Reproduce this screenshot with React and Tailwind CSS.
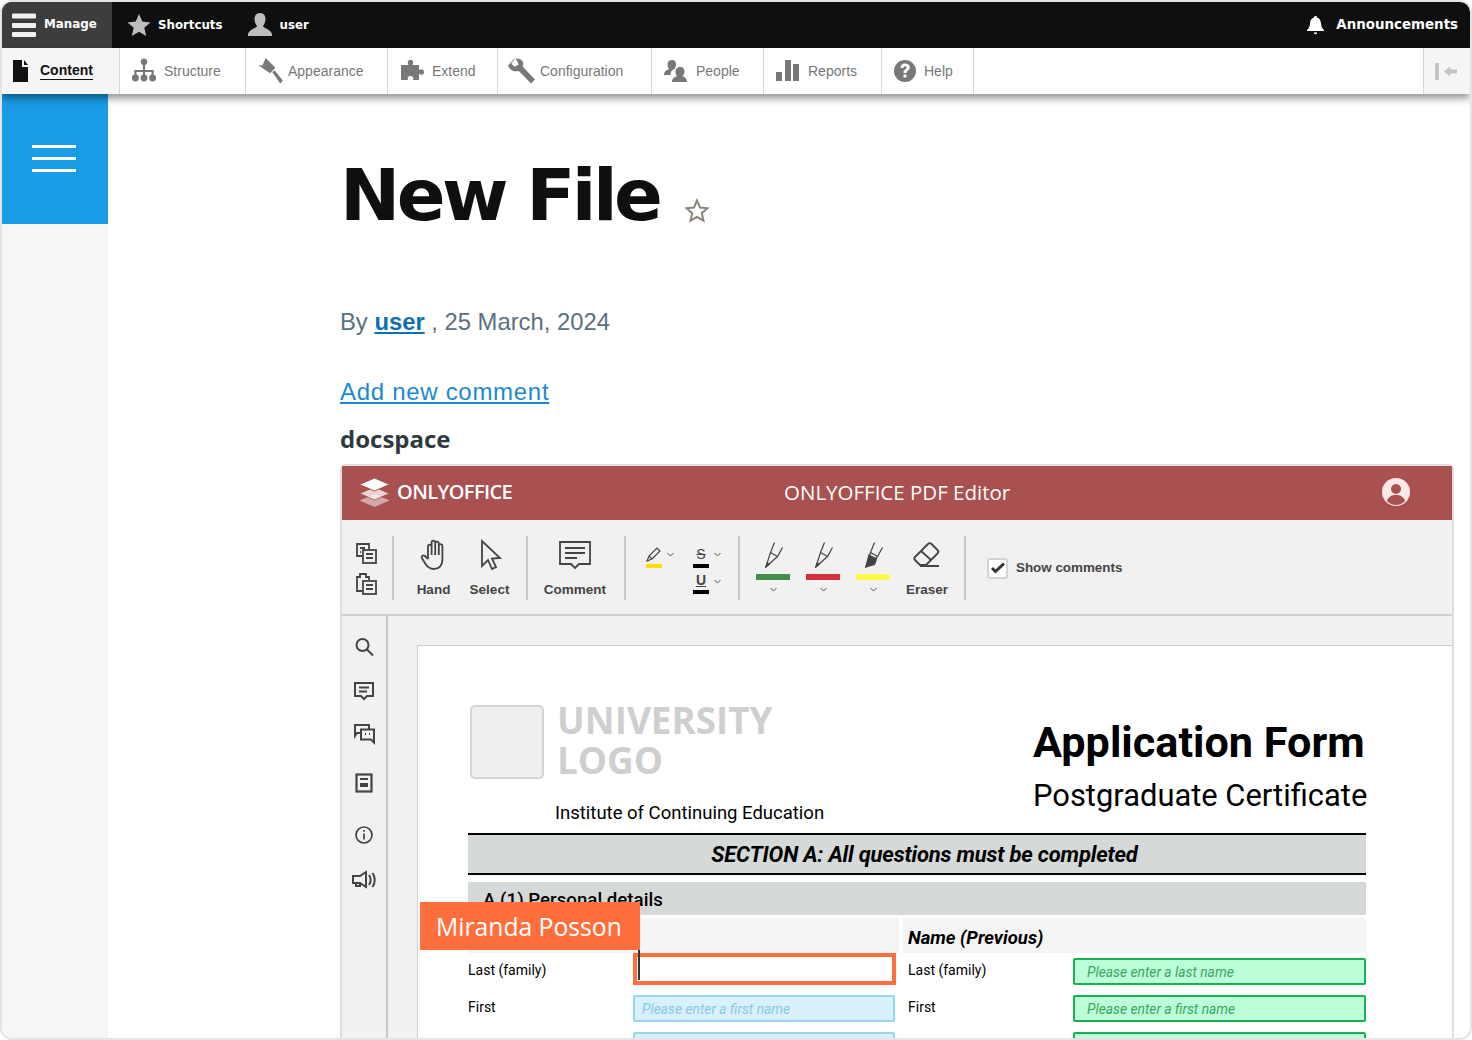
const arial = "font-['Liberation_Sans',Arial,sans-serif]";
const roboto = "font-['Roboto',sans-serif]";
const open = "font-['Open_Sans',sans-serif]";
const deja = "font-['DejaVu_Sans',sans-serif]";

const Gray = ({ children, size = 26, box = '0 0 26 26', fill = '#787878' }) => (
  <svg width={size} height={size} viewBox={box} fill={fill}>{children}</svg>
);

const adminItems = [
  {
    label: 'Structure', width: 'w-[126px] pl-[10px]', gap: 'gap-[6px]', icon: (
      <Gray size={28}><circle cx="13" cy="4.500" r="3" /><path d="M12 6h2v6h8v5h-2v-3h-6v3h-2v-3H6v3H4v-5h8z" /><circle cx="5" cy="19.500" r="3.200" /><circle cx="13" cy="19.500" r="3.200" /><circle cx="21" cy="19.500" r="3.200" /></Gray>
    ),
  },
  {
    label: 'Appearance', width: 'w-[142px] pl-[10px]', gap: 'gap-[4px]', icon: (
      <Gray size={28}><path d="M9 1l9 9-5 5-11-7.500L6 8z" /><path d="M15 14l2.500-1.500 7.500 9.500-2.500 2.500z" /></Gray>
    ),
  },
  {
    label: 'Extend', width: 'w-[110px] pl-[11px]', gap: 'gap-[7px]', icon: (
      <Gray><path d="M2 7h7.500C8 4 9 2 11.500 2S15 4 13.500 7H20v5c3-1.500 5-.5 5 2s-2 3.500-5 2v6h-6c1-3-.5-4-2.500-4S8 19 9 22H2z" /></Gray>
    ),
  },
  {
    label: 'Configuration', width: 'w-[154px] pl-[10px]', gap: 'gap-[4px]', icon: (
      <Gray size={28}><path d="M0 8l6-6.500c3-.5 6 0 7.500 2.500.8 1.500.8 3.500.3 5L25 21l-3.500 3.500L10 13c-2 .5-4.500.5-6-.5-2-1-3.500-2.500-4-4.500z" /><path d="M7 1L3 6l3 3 4-2z" fill="#fff" /></Gray>
    ),
  },
  {
    label: 'People', width: 'w-[112px] pl-[11px]', gap: 'gap-[7px]', icon: (
      <Gray><path d="M9 2c3 0 4 2 4 4.500 0 2-1 3.500-1.500 4.500-3 1-4 3-4 6H1c0-4 3-5 5-6-1-1-1.500-3-1.500-4.500C4.500 4 6 2 9 2z" /><path d="M17 9c3 0 4.500 2 4.500 4.500 0 2-1 3.500-2 4.500 2 1 4.500 2 4.500 6H9c0-4 3-5 5-6-1-1-1.500-2.500-1.500-4.500C12.500 11 14 9 17 9z" /></Gray>
    ),
  },
  {
    label: 'Reports', width: 'w-[118px] pl-[11px]', gap: 'gap-[7px]', icon: (
      <Gray><rect x="1" y="14" width="6" height="9" /><rect x="10" y="2" width="6" height="21" /><rect x="18" y="6" width="6" height="17" /></Gray>
    ),
  },
  {
    label: 'Help', width: 'w-[92px] pl-[10px]', gap: 'gap-[6px]', icon: (
      <Gray><path fillRule="evenodd" d="M13 2a11 11 0 1 1 0 22 11 11 0 0 1 0-22zM8.500 10h3c0-1 .5-1.800 1.500-1.800s1.600.6 1.600 1.400c0 1.700-3.100 2-3.100 5.400h3c0-2.400 3.300-2.700 3.300-5.600C17.800 7 15.800 5.500 13 5.500c-2.900 0-4.500 1.900-4.500 4.500zM11.500 16.500v3h3v-3z" /></Gray>
    ),
  },
];

const Ic = ({ w = 30, h = 30, box = '0 0 30 30', sw = 2, children }) => (
  <svg width={w} height={h} viewBox={box} fill="none" stroke="#444" strokeWidth={sw}>{children}</svg>
);

const Chevron = () => (
  <svg width="7" height="5" viewBox="0 0 7 5" fill="none" stroke="#555" strokeWidth="1"><path d="M.5 1L3.500 4 6.500 1" /></svg>
);

const Divider = () => <div className="w-[2px] h-[64px] bg-[#c8c8c8]" />;

const Marker = ({ color, fat }) => (
  <div className="flex flex-col items-center w-[34px]">
    <svg className="translate-x-[2px]" width="20" height="26" viewBox="0 0 20 26" fill="none" stroke="#444" strokeWidth="1.200">
      <path d="M9.500.5L5.500 10.500.8 25 12.500 14.500 17.500 5.500" />
      <path d="M5.500 10.500l7 4" />
      {fat ? <path d="M4 13l7.500 4-2 5.500-8.500 2.500z" fill="#444" /> : <path d="M.8 25l3.400-2.800-2-1z" fill="#444" />}
    </svg>
    <div className="w-[34px] h-[6px] mt-[6px]" style={{ backgroundColor: color }} />
    <div className="mt-[7px] h-[5px] flex"><Chevron /></div>
  </div>
);

const Field = ({ text, tone, className = '' }) => (
  <div className={`${tone === 'green' ? 'bg-[#bdffd8] border-[#16b150] text-[#35a85f] w-[293px] pl-[12px]' : 'bg-[#d8f1fd] border-[#9bd6ef] text-[#89c8e4] w-[262px] pl-[7px]'} h-[27px] border-2 rounded-[2px] italic text-[13.800px] leading-[24px] ${className}`}>
    {text}
  </div>
);

export default function App() {
  return (
    <div className="w-[1472px] h-[1040px] overflow-hidden bg-white border-2 border-[#e4e4e4] rounded-[12px] flex flex-col relative">
      {/* drupal toolbar */}
      <div className="h-[46px] bg-[#0f0f0f] flex items-center shrink-0 relative z-20">
        <div className={`${deja} w-[110px] h-full bg-[#3d3d3d] flex items-center pl-[10px] gap-[8px] text-white text-[11.900px] font-bold`}>
          <svg width="24" height="24" viewBox="0 0 24 24" fill="#f0f0f0" className="shrink-0"><rect y="0.500" width="24" height="5" rx="1" /><rect y="10" width="24" height="5" rx="1" /><rect y="19" width="24" height="5" rx="1" /></svg>
          <span>Manage</span>
        </div>
        <div className={`${deja} flex items-center pl-[15px] gap-[8px] text-white text-[11.800px] font-bold`}>
          <svg width="24" height="24" viewBox="0 0 24 24" fill="#bdbdbd"><path d="M12 1l3.300 7.600 8.200.8-6.200 5.400 1.900 8.200L12 18.700 4.800 23l1.900-8.200L.5 9.400l8.200-.8z" /></svg>
          <span className="-ml-[1px] pt-[1px]">Shortcuts</span>
          <svg className="ml-[17px]" width="24" height="24" viewBox="0 0 24 24" fill="#bdbdbd"><path d="M12 0c4 0 5.500 3 5.500 6 0 3-1.200 5.500-2.500 7 0 2 7.500 3 9 8v2H0v-2c1.500-5 9-6 9-8-1.300-1.500-2.500-4-2.500-7S8 0 12 0z" /></svg>
          <span className="pt-[1px]">user</span>
        </div>
        <div className={`${deja} ml-auto flex items-center gap-[11px] pr-[12px] text-white text-[13.400px] font-bold`}>
          <svg width="19" height="20" viewBox="0 0 19 20" fill="#fff"><path d="M9.500 1c1 0 1.500.6 1.500 1.400 2.700.7 3.800 3 4 6 .2 3 1.200 5 3 6.600v1H1v-1c1.800-1.600 2.800-3.600 3-6.600.2-3 1.300-5.300 4-6 0-.8.500-1.400 1.500-1.400zM7.800 17.500h3.400c0 1-.7 1.700-1.700 1.700s-1.700-.7-1.700-1.700z" /></svg>
          <span className="pt-[1px]">Announcements</span>
        </div>
      </div>
      <div className={`${arial} h-[46px] bg-white flex shrink-0 relative z-20 shadow-[0_4px_8px_rgba(0,0,0,0.45)] text-[14px] text-[#787878]`}>
        <div className="w-[118px] bg-[#f5f5f5] border-r border-[#d8d8d8] flex items-center pl-[10px] gap-[11px] shrink-0">
          <svg width="17" height="24" viewBox="0 0 17 24" fill="#111"><path d="M1 1h9v7h6v15H1z" /><path d="M12 1l4 5h-4z" /></svg>
          <span className="font-bold text-[#111] border-b border-[#111] leading-[17px]">Content</span>
        </div>
        {adminItems.map((item) => (
          <div key={item.label} className={`${item.width} ${item.gap} border-r border-[#d8d8d8] flex items-center shrink-0`}>
            {item.icon}
            <span>{item.label}</span>
          </div>
        ))}
        <div className="ml-auto w-[47px] bg-[#f5f5f5] border-l border-[#d8d8d8] flex items-center pl-[10px]">
          <svg width="24" height="18" viewBox="0 0 24 18" fill="#c4c4c4"><rect x="1" y="1" width="4" height="17" /><path d="M10 9.500l6-5v3h7v4h-7v3z" /></svg>
        </div>
      </div>

      <div className="flex flex-1 min-h-0">
        {/* left rail */}
        <div className="w-[106px] bg-[#f5f6f6] shrink-0">
          <div className="h-[130px] bg-[#1a9be6] flex items-center justify-center pb-[2px]">
            <div className="w-[44px] flex flex-col gap-[9px] -ml-[2px]">
              <div className="h-[3px] bg-white" />
              <div className="h-[3px] bg-white" />
              <div className="h-[3px] bg-white" />
            </div>
          </div>
        </div>

        <div className="flex-1 min-w-0 pl-[232px] pt-[55px]">
          <div className={`${deja} flex items-start`}>
            <h1 className="text-[72px] leading-[92px] font-bold tracking-[-3.600px] text-[#0f0f0f]">New File</h1>
            <svg className="ml-[25px] mt-[49px]" width="26" height="26" viewBox="0 0 26 26" fill="none" stroke="#8a8678" strokeWidth="2"><path d="M13 2.500l3 7 7.500.7-5.700 5 1.700 7.500L13 18.800l-6.500 3.900 1.700-7.500-5.700-5 7.500-.7z" /></svg>
          </div>
          <p className={`${arial} mt-[65px] text-[23.800px] leading-[32px] text-[#5c7080]`}>
            By <a className="font-bold text-[#0f70ae] underline">user</a> , 25 March, 2024
          </p>
          <a className={`${arial} block mt-[38px] text-[24px] leading-[32px] tracking-[0.7px] text-[#1a8ad0] underline`}>Add new comment</a>
          <p className={`${open} mt-[15px] text-[24px] leading-[32px] font-bold text-[#2e3a40]`}>docspace</p>

          {/* editor frame */}
          <div className="mt-[9px] w-[1114px] border-2 border-[#dedede] rounded-t-[6px] bg-[#f1f1f1]">
            <div className="h-[54px] bg-[#a95050] flex items-center relative text-white">
              <div className="flex items-center pl-[16px] gap-[6px] -mt-[2px]">
                <svg width="33" height="30" viewBox="0 0 33 30" fill="#fff">
                  <path d="M16.500 17l15 6.500-15 6.500-15-6.500z" opacity="0.5" />
                  <path d="M16.500 10l15 6.500-15 6.500-15-6.500z" opacity="0.75" stroke="#a95050" />
                  <path d="M16.500 1l15 6.500-15 6.500-15-6.500z" stroke="#a95050" />
                </svg>
                <span className={`${open} text-[20px] font-semibold tracking-[-0.6px]`}>ONLYOFFICE</span>
              </div>
              <span className={`${open} absolute left-[442px] top-[12px] text-[20.500px] leading-[28px] font-medium`}>ONLYOFFICE PDF Editor</span>
              <svg className="ml-auto mr-[42px] -mt-[2px]" width="28" height="28" viewBox="0 0 28 28"><circle cx="14" cy="14" r="14" fill="#fbe9e9" /><circle cx="14" cy="11" r="5" fill="#a95050" /><path d="M5 23c1.500-5 5-6 9-6s7.500 1 9 6c-2.500 2.500-5.500 4-9 4s-6.500-1.500-9-4z" fill="#a95050" /></svg>
            </div>

            <div className={`${arial} h-[96px] border-b-2 border-[#d0d0d0] pt-[2px] flex items-center text-[#444] text-[13.500px] font-bold`}>
              <div className="w-[51px] flex flex-col items-center gap-[7px] -ml-[1px] pr-[2px]">
                <Ic w={24} h={24} box="0 0 24 24" sw={1.800}><path d="M8 15H3V3h12v5M6 7h5M6 11h1" /><rect x="9" y="9" width="13" height="13" /><path d="M12 13h7M12 17h7" /></Ic>
                <Ic w={24} h={24} box="0 0 24 24" sw={1.800}><path d="M8 19H3V5h3V2h6v3h3v3" /><rect x="9" y="9" width="13" height="13" /><path d="M12 13h7M12 17h7" /></Ic>
              </div>
              <Divider />
              <div className="w-[132px] flex justify-center gap-[19px] pl-[6px] font-bold">
                <div className="flex flex-col items-center w-[34px]">
                  <Ic w={30} h={34} box="0 0 30 34" sw={1.800}><path d="M9 21V8.500a1.800 1.800 0 0 1 3.600 0V17M12.600 17V4.500a1.800 1.800 0 0 1 3.600 0V17M16.200 17V5.500a1.800 1.800 0 0 1 3.600 0V17M19.800 17V8a1.800 1.800 0 0 1 3.600 0v14c0 5.500-3.500 9-8.500 9-4.500 0-7-2.500-9-6l-3-5c-1-2 1.500-3.500 3-2l3 3" /></Ic>
                  <span className="mt-[9px] leading-[18px]">Hand</span>
                </div>
                <div className="flex flex-col items-center w-[40px]">
                  <Ic w={30} h={34} box="0 0 30 34" sw={1.800}><path d="M7 3v25l6-6 4 9 4-2-4-8.500 8-.5z" /></Ic>
                  <span className="mt-[9px] leading-[18px]">Select</span>
                </div>
              </div>
              <Divider />
              <div className="w-[96px] flex flex-col items-center pr-[2px]">
                <Ic w={34} h={34} box="0 0 34 34" sw={1.800}><path d="M2 4h30v22H21l-4 4-4-4H2z" /><path d="M7 10h20M7 15h20M7 20h12" /></Ic>
                <span className="mt-[9px] leading-[18px]">Comment</span>
              </div>
              <Divider />
              <div className="w-[112px] flex gap-[19px] pl-[20px] items-start self-center h-[64px] pt-[10px]">
                <div className="flex items-start gap-[4px]">
                  <div className="flex flex-col">
                    <Ic w={17} h={17} box="0 0 17 17" sw={1.200}><path d="M1 15l2-5 8-8 3 3-8 8zM3 10l3 3" /></Ic>
                    <div className="w-[16px] h-[4px] bg-[#ffdf00] mt-[1px]" />
                  </div>
                  <div className="mt-[6px] flex"><Chevron /></div>
                </div>
                <div className="flex flex-col">
                  <div className="flex items-start gap-[5px]">
                    <div className="flex flex-col items-center w-[16px] text-[#444] text-[14px] leading-[16px] font-normal line-through"><span className="h-[17px]">S</span><div className="w-[16px] h-[4px] bg-black mt-[1px]" /></div>
                    <div className="mt-[6px] flex"><Chevron /></div>
                  </div>
                  <div className="flex items-start gap-[5px] mt-[5px]">
                    <div className="flex flex-col items-center w-[16px] text-[14px] leading-[14px]"><span className="underline h-[17px]">U</span><div className="w-[16px] h-[4px] bg-black" /></div>
                    <div className="mt-[6px] flex"><Chevron /></div>
                  </div>
                </div>
              </div>
              <Divider />
              <div className="flex gap-[16px] pl-[16px] pt-[6px] items-start self-center h-[64px]">
                <Marker color="#429048" />
                <Marker color="#d4313a" />
                <Marker color="#fffb4d" fat />
              </div>
              <div className="flex flex-col items-center w-[50px] ml-[12px] self-center h-[64px] pt-[4px]">
                <Ic w={32} h={30} box="0 0 32 30" sw={1.800}><path d="M4 17L17 4c1-1 2.500-1 3.500 0l6 6c1 1 1 2.500 0 3.500L15 25H9l-5-5c-1-1-1-2 0-3z" /><path d="M10 11l10 9M9 26h19" /></Ic>
                <span className="mt-[11px] leading-[18px]">Eraser</span>
              </div>
              <div className="ml-[12px]"><Divider /></div>
              <div className="flex items-center ml-[21px] gap-[8px] text-[13.400px] text-[#444]">
                <div className="w-[21px] h-[21px] border-2 border-[#d4d4d4] rounded-[3px] bg-white flex items-center justify-center">
                  <svg width="14" height="12" viewBox="0 0 14 12" fill="none" stroke="#333" strokeWidth="3"><path d="M1 6l3.500 3.500L13 1.500" /></svg>
                </div>
                <span>Show comments</span>
              </div>
            </div>

            <div className="flex h-[426px] overflow-hidden">
              <div className="w-[46px] border-r-2 border-[#c9c9c9] shrink-0 flex flex-col items-center pt-[20px]">
                <Ic w={22} h={22} box="0 0 22 22" sw={2}><circle cx="9.500" cy="9" r="6" /><path d="M14 13.500l6 6" /></Ic>
                <div className="mt-[22px]"><Ic w={22} h={22} box="0 0 22 22" sw={2}><path d="M2 3h18v13h-6l-3 3-3-3H2z" /><path d="M6 7.500h10M6 11.500h8" /></Ic></div>
                <div className="mt-[21px]"><Ic w={22} h={22} box="0 0 22 22" sw={2}><path d="M16 6V2H2v11l2-3h3" /><path d="M8 6.500h13v13l-3-3H8z" /><path d="M12 11h1M16 11h1" /></Ic></div>
                <div className="mt-[28px]"><Ic w={20} h={20} box="0 0 20 20" sw={2.200}><rect x="2.500" y="1.500" width="15" height="17" /><path d="M6 6h8M6 11h8M6 13h8" /></Ic></div>
                <div className="mt-[32px]"><Ic w={20} h={20} box="0 0 20 20" sw={1.700}><circle cx="10" cy="10" r="8" /><path d="M10 8.500v6M10 5v1.800" /></Ic></div>
                <div className="mt-[24px]"><Ic w={26} h={22} box="0 0 26 22" sw={2}><path d="M2 7h7l6-4v15l-6-4H2zM5 14v3h4v-3" /><path d="M18 6c2 3 2 7 0 10M21.500 4c3 4 3 10 0 14" /></Ic></div>
              </div>
              <div className="flex-1 min-w-0 pt-[29px] pl-[29px]">
                <div className={`${roboto} w-[1036px] h-[400px] bg-white border border-[#cfcfcf] border-r-0 pl-[50px] pt-[59px] text-black`}>
                  <div className="w-[898px] h-[128px] flex">
                    <div className="w-[564px] shrink-0">
                      <div className="flex ml-[2px]">
                        <div className="w-[74px] h-[74px] bg-[#efefef] border-2 border-[#d4d4d4] rounded-[5px]" />
                        <div className={`${open} ml-[13px] -mt-[5px] text-[#cfcfcf] text-[36.800px] font-bold`}>
                          <div className="leading-[40px]">UNIVERSITY</div>
                          <div className="leading-[40px]">LOGO</div>
                        </div>
                      </div>
                      <p className="ml-[87px] mt-[22px] text-[18.500px] leading-[22px]">Institute of Continuing Education</p>
                    </div>
                    <div className="pl-[1px] pt-[13px]">
                      <p className="text-[43.200px] leading-[50px] font-bold whitespace-nowrap">Application Form</p>
                      <p className="text-[30.900px] leading-[38px] mt-[9px] whitespace-nowrap">Postgraduate Certificate</p>
                    </div>
                  </div>
                  <div className="w-[898px] h-[42px] bg-[#d5d9d8] border-y-2 border-black flex items-center justify-center pl-[15px] italic font-bold text-[22px] tracking-[-0.2px]">
                    SECTION A: All questions must be completed
                  </div>
                  <div className="w-[898px] h-[33px] mt-[7px] bg-[#d5d9d8] pl-[15px] pt-[5px] text-[18.700px] font-medium leading-[26px]">A (1) Personal details</div>
                  <div className="w-[898px] grid grid-cols-[431px_463px] gap-x-[4px] mt-[3px]">
                    <div className="h-[35px] bg-[#f4f4f4]" />
                    <div className="h-[35px] bg-[#f4f4f4] pl-[5px] italic font-bold text-[18.500px] leading-[40px]">Name (Previous)</div>
                  </div>
                  <div className="w-[898px] flex text-[14px]">
                    <div className="w-[435px] shrink-0">
                      <div className="flex items-start">
                        <span className="w-[165px] leading-[34px]">Last (family)</span>
                        <div className="w-[263px] h-[32px] border-[4px] border-[#ff6f3d] bg-white" />
                      </div>
                      <div className="flex items-start mt-[8px]">
                        <span className="w-[165px] leading-[24px]">First</span>
                        <Field text="Please enter a first name" tone="blue" />
                      </div>
                      <div className="ml-[165px] mt-[10px]"><Field text="" tone="blue" /></div>
                    </div>
                    <div className="pl-[5px]">
                      <div className="flex items-start mt-[5px]">
                        <span className="w-[165px] leading-[24px]">Last (family)</span>
                        <Field text="Please enter a last name" tone="green" />
                      </div>
                      <div className="flex items-start mt-[10px]">
                        <span className="w-[165px] leading-[24px]">First</span>
                        <Field text="Please enter a first name" tone="green" />
                      </div>
                      <div className="ml-[165px] mt-[10px]"><Field text="" tone="green" /></div>
                    </div>
                  </div>
                </div>
              </div>
            </div>
          </div>
        </div>
      </div>

      {/* collaborator cursor */}
      <div className="absolute left-[418px] top-[900px] z-10">
        <div className={`${open} w-[220px] h-[48px] bg-[#ff6f3d] text-white text-[24.700px] leading-[50px] pl-[16px]`}>Miranda Posson</div>
        <div className="absolute left-[218px] top-[48px] w-[2px] h-[30px] bg-[#333]" />
      </div>
    </div>
  );
}
